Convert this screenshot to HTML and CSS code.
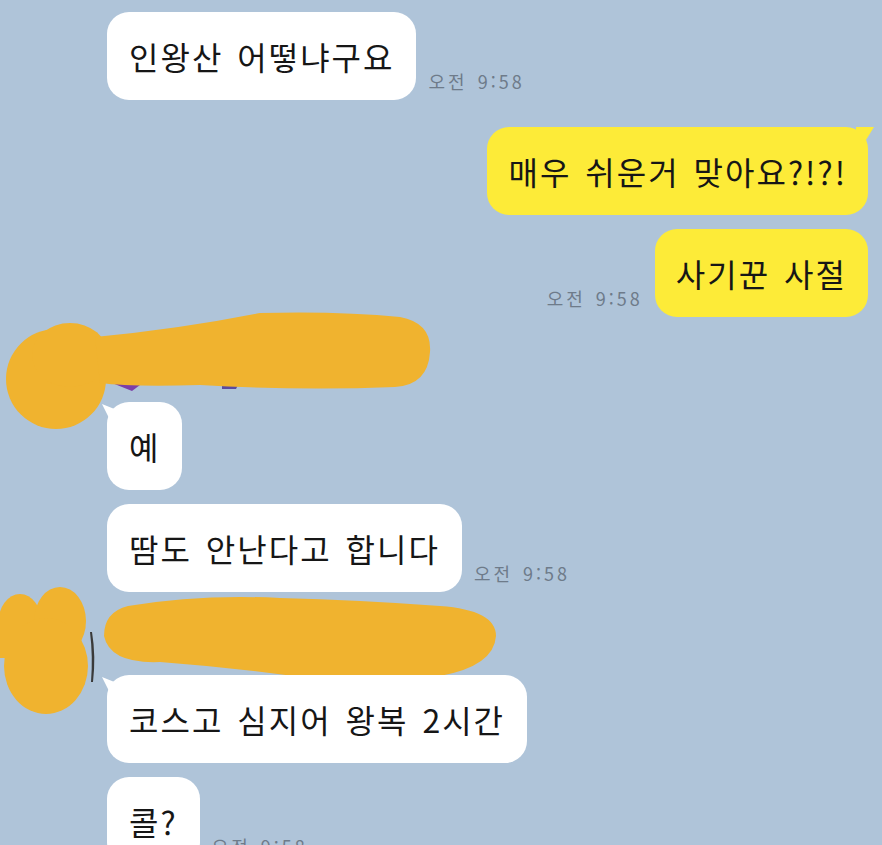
FILE: index.html
```html
<!DOCTYPE html>
<html lang="ko">
<head>
  <meta charset="UTF-8">
  <meta name="viewport" content="width=device-width, initial-scale=1.0">
  <title>채팅</title>
  <link rel="stylesheet" href="styles.css">
</head>
<body>

<div id="chat">

  <div class="row left first">
    <div class="bubble white">인왕산 어떻냐구요</div>
    <span class="time">오전 9:58</span>
  </div>

  <div class="row right gap-big">
    <div class="bubble yellow tail-right">매우 쉬운거 맞아요?!?!</div>
  </div>

  <div class="row right gap-small">
    <span class="time">오전 9:58</span>
    <div class="bubble yellow">사기꾼 사절</div>
  </div>

  <!-- profile + name, painted over -->
  <div class="sender sender-one">
    <svg class="scribble" width="440" height="135" viewBox="0 0 440 135">
      <path d="M112 76 L140 78 L132 84 Z" fill="#7b3fa8"/>
      <path d="M222 78 L238 78 L236 82 L222 82 Z" fill="#5a4aa0"/>
      <circle cx="56" cy="72" r="50" fill="#f0b32f"/>
      <ellipse cx="70" cy="48" rx="38" ry="32" fill="#f0b32f"/>
      <path d="M95 30 Q180 22 260 6 Q340 4 400 10 Q432 16 430 45 Q428 78 395 80 Q300 84 200 78 Q130 80 100 76 Z" fill="#f0b32f"/>
    </svg>
  </div>

  <div class="row left">
    <div class="bubble white tail-left">예</div>
  </div>

  <div class="row left gap-small">
    <div class="bubble white">땀도 안난다고 합니다</div>
    <span class="time">오전 9:58</span>
  </div>

  <div class="sender sender-two">
    <svg class="scribble" width="500" height="135" viewBox="0 0 500 135">
      <path d="M92 46 Q96 70 93 96 L91 96 Q93 70 90 46 Z" fill="#3a3a3a"/>
      <path d="M212 70 L235 68 L235 72 L212 73 Z" fill="#4a4f8a"/>
      <ellipse cx="20" cy="38" rx="22" ry="30" fill="#f0b32f"/>
      <ellipse cx="60" cy="35" rx="26" ry="34" fill="#f0b32f"/>
      <ellipse cx="46" cy="80" rx="42" ry="48" fill="#f0b32f"/>
      <path d="M0 45 L20 45 L20 72 L0 72 Z" fill="#f0b32f"/>
      <path d="M128 20 Q200 8 280 12 Q360 14 440 20 Q496 24 496 50 Q494 80 440 90 Q380 100 320 94 Q240 82 160 76 Q110 78 104 50 Q104 26 128 20 Z" fill="#f0b32f"/>
    </svg>
  </div>

  <div class="row left">
    <div class="bubble white tail-left">코스고 심지어 왕복 2시간</div>
  </div>

  <div class="row left gap-small">
    <div class="bubble white">콜?</div>
    <span class="time">오전 9:58</span>
  </div>

</div>

</body>
</html>
```

FILE: styles.css
```css
body {
  margin: 0;
  background-color: #afc4d9;
  font-family: "Noto Sans CJK KR", "Noto Sans", sans-serif;
  overflow: hidden;
}

#chat {
  display: flex;
  flex-direction: column;
  padding-top: 12px;
}

.row {
  display: flex;
  align-items: flex-end;
  gap: 12px;
}

.row.left {
  padding-left: 107px;
}

.row.right {
  justify-content: flex-end;
  padding-right: 14px;
}

.gap-big {
  margin-top: 27px;
}

.gap-small {
  margin-top: 14px;
}

.bubble {
  position: relative;
  font-size: 32px;
  line-height: 44px;
  padding: 22px 22px;
  border-radius: 22px;
  color: #161616;
  letter-spacing: 2px;
  word-spacing: 3px;
  white-space: nowrap;
}

.bubble.white {
  background-color: #ffffff;
}

.bubble.yellow {
  background-color: #fdeb38;
  padding: 22px 21px;
}

.tail-right::after {
  content: "";
  position: absolute;
  top: 0;
  right: -6px;
  width: 18px;
  height: 16px;
  background-color: #fdeb38;
  clip-path: polygon(0 0, 100% 0, 45% 100%, 0 100%);
}

.tail-left::before {
  content: "";
  position: absolute;
  top: 2px;
  left: -5px;
  width: 18px;
  height: 18px;
  background-color: #ffffff;
  clip-path: polygon(0 0, 100% 40%, 100% 100%, 50% 100%);
}

.time {
  font-size: 18px;
  line-height: 20px;
  color: #6e7b8a;
  letter-spacing: 3px;
  word-spacing: 2px;
  padding-bottom: 9px;
  white-space: nowrap;
}

.sender {
  position: relative;
  height: 85px;
}

.sender-two {
  height: 83px;
}

.scribble {
  position: absolute;
  left: 0;
}

.sender-one .scribble {
  top: -10px;
}

.sender-two .scribble {
  top: -6px;
}
```
